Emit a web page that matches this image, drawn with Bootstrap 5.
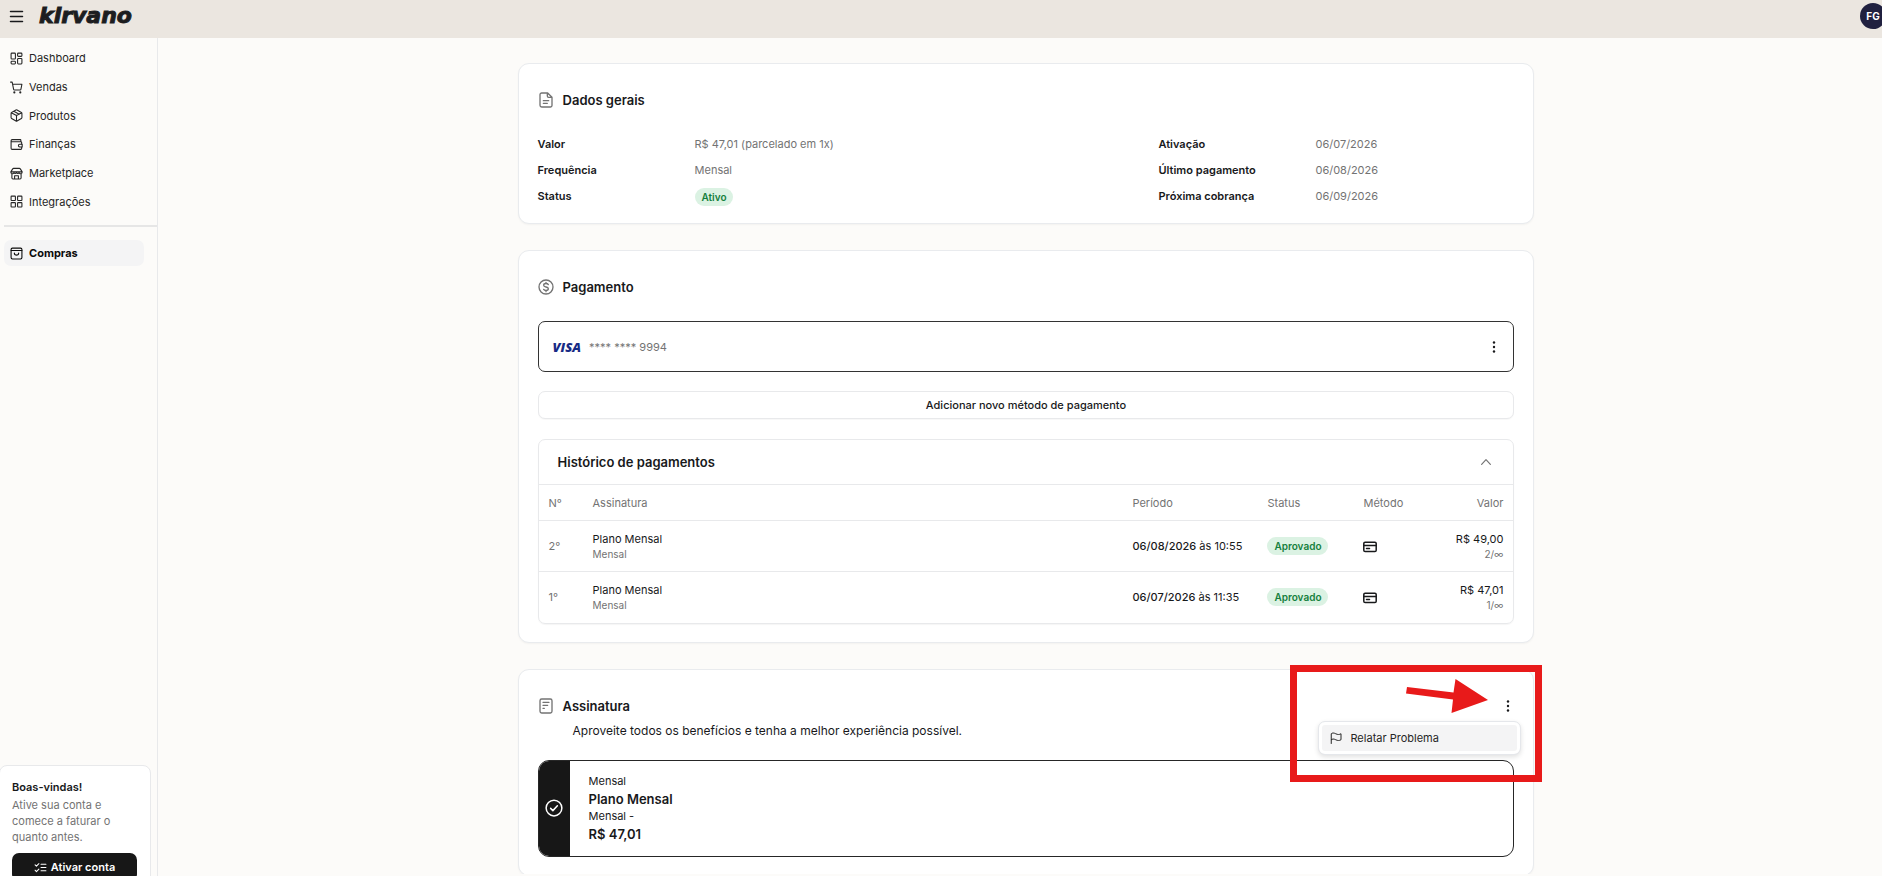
<!DOCTYPE html>
<html lang="pt-BR">
<head>
<meta charset="utf-8">
<meta name="viewport" content="width=device-width, initial-scale=1">
<title>Kirvano - Compras</title>
<link rel="stylesheet" href="https://cdn.jsdelivr.net/npm/bootstrap@5.3.0/dist/css/bootstrap.min.css">
<style>
  :root { --ink: #18191b; --muted: #737373; --line: #e8e9eb; --dark: #171717; }
  body { font-family: Inter, "Liberation Sans", sans-serif; font-size: 11px; line-height: 16px; color: var(--ink); background: #fcfbf9; }
  svg { flex: none; }
  .ico { fill: none; stroke: currentColor; stroke-width: 2; stroke-linecap: round; stroke-linejoin: round; }
  .ico-wide { stroke-width: 1.5; }
  .fw-medium-x { font-weight: 500; }
  .fw-semi { font-weight: 600; }
  .quiet { color: var(--muted); }
  .fine { font-size: 10px; line-height: 14px; }
  .btn { --bs-btn-font-size: 11px; --bs-btn-line-height: 16px; }
  .btn-bare { padding: 0; border: 0; color: inherit; display: inline-flex; }

  .topbar { height: 38px; background: #ebe6e0; padding: 0 0 6px 9px; overflow: hidden; }
  .brand { font-family: "DejaVu Sans", sans-serif; font-weight: 700; font-style: italic; font-size: 22px; line-height: 26px; color: #1c1d1f; -webkit-text-stroke: 1px #1c1d1f; text-decoration: none; margin-left: 15px; }
  .avatar { width: 26px; height: 26px; margin-right: -4px; background: #20203f; color: #fff; font-size: 10px; font-weight: 700; }

  .shell { height: calc(100vh - 38px); }
  .sidebar { width: 158px; border-right: 1px solid var(--line); overflow: hidden; }
  .menu { height: 172px; margin-top: 6px; }
  .side-link { color: #262626; text-decoration: none; display: flex; align-items: center; gap: 6px; padding: 0 6px; height: 26px; border-radius: 7px; margin: 0 13px 0 4px; }
  .side-link.active { background: #f4f4f5; font-weight: 700; color: #0a0a0a; }
  .side-rule { margin: 9px 0 13px 4px; border-top: 2px solid #e6e6e6; opacity: 1; }
  .welcome { width: 152px; margin: auto 0 -18px -1px; padding: 13px 13px 12px 12px; border: 1px solid var(--line); border-radius: 8px; background: #fff; }
  .welcome p { margin: 2px 0 8px; }
  .btn-ink { --bs-btn-bg: #171717; --bs-btn-color: #fff; --bs-btn-hover-bg: #333; --bs-btn-hover-color: #fff; --bs-btn-border-radius: 7px; height: 28px; padding: 0; font-weight: 600; border: 0; }

  .stage { height: calc(100vh - 40px); padding: 25px 0 0 12px; overflow: hidden; }
  .stack { width: 59.4%; min-width: 860px; }
  .panel { background: #fff; border: 1px solid #e9ebee; border-radius: 11px; padding: 0 19px 18px; box-shadow: 0 1px 2px rgba(0,0,0,.04); margin-bottom: 26px; position: relative; }
  .panel-head { height: 34px; margin-top: 19px; display: flex; align-items: center; gap: 9px; }
  .panel-head h2 { font-size: 13px; line-height: 18px; font-weight: 600; margin: 0; }
  .facts { display: grid; grid-template-columns: 157px 1fr 157px 199px; margin: 14px 0 -4px; line-height: 26px; }
  .facts dt { font-weight: 600; }
  .facts dd { margin: 0; color: var(--muted); }
  .tag-ok { display: inline-block; background: #dbf2e3; color: #15803d; font-size: 10px; font-weight: 600; line-height: 18px; padding: 0 7px; border-radius: 9px; vertical-align: middle; }

  .pay-card { height: 51px; margin-top: 17px; border: 1px solid #333; border-radius: 7px; padding: 0 14px; }
  .visa { font-family: "Open Sans", sans-serif; font-weight: 800; font-style: italic; font-size: 13px; color: #172b85; }
  .btn-line { height: 28px; margin: 19px 0 20px; padding: 0; background: #fff; border: 1px solid var(--line); border-radius: 7px; font-weight: 500; color: var(--ink); box-shadow: 0 1px 1px rgba(0,0,0,.03); }
  .history { border: 1px solid var(--line); border-radius: 7px; box-shadow: 0 1px 1px rgba(0,0,0,.04); }
  .history-head { width: 100%; height: 44px; padding: 0 20px 0 19px; border: 0; background: none; font-size: 13px; font-weight: 600; color: var(--ink); }
  .pays { table-layout: fixed; margin: 0; color: var(--ink); --bs-table-bg: transparent; --bs-table-color: var(--ink); }
  .pays th, .pays td { padding: 0 10px; border: 0; border-top: 1px solid var(--line); vertical-align: middle; white-space: nowrap; }
  .pays th { height: 36px; font-weight: 400; color: var(--muted); }
  .pays td { height: 51px; }
  .pays .quiet { color: var(--muted); }
  .w-num { width: 44px; } .w-per { width: 135px; } .w-sta { width: 96px; } .w-met { width: 83px; } .w-val { width: 77px; }

  .plan { height: 97px; margin-top: 21px; border: 1px solid #262626; border-radius: 11px; overflow: hidden; }
  .plan-check { width: 31px; background: var(--dark); color: #fff; }
  .plan-text { padding-left: 19px; line-height: 17px; }
  .plan-name { font-size: 13px; font-weight: 600; line-height: 18px; }
  .blurb { margin: 0 0 0 35px; font-size: 12px; line-height: 16px; }
  .more-menu { position: absolute; top: 51px; right: 12px; z-index: 2; width: 203px; min-width: 0; padding: 3px; border: 1px solid #e5e7eb; border-radius: 7px; box-shadow: 0 2px 5px rgba(0,0,0,.12); }
  .more-menu .dropdown-item { height: 26px; padding: 0 8px; font-size: 11px; background: #f4f4f5; border-radius: 3px; color: #262626; }
  .callout { position: absolute; top: -5px; right: -9px; z-index: 3; pointer-events: none; }
</style>
</head>
<body class="overflow-hidden">
<header class="topbar d-flex align-items-center">
  <button class="btn btn-bare" aria-label="Abrir menu"><svg class="ico ico-wide" width="15" height="15" viewBox="0 0 15 15"><path d="M1.500 2.500h12M1.500 7.500h12M1.500 12.500h12"/></svg></button>
  <a class="brand" href="#">kirvano</a>
  <button class="btn btn-bare avatar rounded-circle ms-auto align-items-center justify-content-center">FG</button>
</header>

<div class="shell d-flex">
  <aside class="sidebar d-flex flex-column flex-shrink-0">
    <ul class="menu list-unstyled d-flex flex-column mb-0">
      <li class="flex-fill d-flex align-items-center"><a class="side-link" href="#"><svg class="ico" width="13" height="13" viewBox="0 0 24 24"><rect x="2" y="2" width="8" height="11" rx="1.5"/><rect x="14" y="2" width="8" height="6" rx="1.5"/><rect x="14" y="12" width="8" height="10" rx="1.5"/><rect x="2" y="17" width="8" height="5" rx="1.5"/></svg>Dashboard</a></li>
      <li class="flex-fill d-flex align-items-center"><a class="side-link" href="#"><svg class="ico" width="13" height="13" viewBox="0 0 24 24"><circle cx="8" cy="21" r="1"/><circle cx="19" cy="21" r="1"/><path d="M1 2h3l2.7 13.4a1.5 1.5 0 0 0 1.5 1.2h10.4a1.5 1.5 0 0 0 1.5-1.2L22 6H5"/></svg>Vendas</a></li>
      <li class="flex-fill d-flex align-items-center"><a class="side-link" href="#"><svg class="ico" width="13" height="13" viewBox="0 0 24 24"><path d="M11 22.2a2 2 0 0 0 2 0l8-4.6a2 2 0 0 0 1-1.7V8.1a2 2 0 0 0-1-1.7l-8-4.6a2 2 0 0 0-2 0L3 6.400a2 2 0 0 0-1 1.700v7.800a2 2 0 0 0 1 1.700zM12 22V12M2.400 7 12 12l9.600-5M7 4.300l10 5.200"/></svg>Produtos</a></li>
      <li class="flex-fill d-flex align-items-center"><a class="side-link" href="#"><svg class="ico" width="13" height="13" viewBox="0 0 24 24"><path d="M20 7V4a1 1 0 0 0-1-1H4a2 2 0 0 0 0 4h16a1.500 1.500 0 0 1 1.500 1.500V11M2 5v14a2 2 0 0 0 2 2h16a1.500 1.500 0 0 0 1.500-1.500V17"/><path d="M22.500 11.500H18a2.500 2.500 0 0 0 0 5h4.500z"/></svg>Finanças</a></li>
      <li class="flex-fill d-flex align-items-center"><a class="side-link" href="#"><svg class="ico" width="13" height="13" viewBox="0 0 24 24"><path d="M1.500 9 5 3.500A2 2 0 0 1 6.700 2.500h10.600A2 2 0 0 1 19 3.500L22.500 9zM3.500 12.500V20a2 2 0 0 0 2 2h13a2 2 0 0 0 2-2v-7.500M8.500 22v-6h7v6M1.500 9a3 3 0 0 0 5.500 2 3.500 3.500 0 0 0 5 0 3.500 3.500 0 0 0 5 0 3 3 0 0 0 5.500-2"/></svg>Marketplace</a></li>
      <li class="flex-fill d-flex align-items-center"><a class="side-link" href="#"><svg class="ico" width="13" height="13" viewBox="0 0 24 24"><rect x="2" y="2" width="8" height="8" rx="1"/><rect x="14" y="2" width="8" height="8" rx="1"/><rect x="14" y="14" width="8" height="8" rx="1"/><rect x="2" y="14" width="8" height="8" rx="1"/></svg>Integrações</a></li>
    </ul>
    <hr class="side-rule">
    <a class="side-link active" href="#"><svg class="ico" width="13" height="13" viewBox="0 0 24 24"><rect x="2" y="2" width="20" height="20" rx="2.500"/><path d="M2 6.500h20M16 11a4 4 0 0 1-8 0"/></svg>Compras</a>
    <section class="welcome">
      <div class="fw-semi">Boas-vindas!</div>
      <p class="quiet">Ative sua conta e<br>comece a faturar o<br>quanto antes.</p>
      <button class="btn btn-ink w-100 d-flex align-items-center justify-content-center gap-1"><svg class="ico" width="13" height="13" viewBox="0 0 24 24"><path d="m2 17 2.500 2.500L9 15M2 7l2.500 2.500L9 5M13 6h9M13 12h9M13 18h9"/></svg>Ativar conta</button>
    </section>
  </aside>

  <main class="stage flex-grow-1">
    <div class="stack mx-auto">

      <section class="panel">
        <div class="panel-head">
          <svg class="ico quiet" width="16" height="16" viewBox="0 0 24 24"><path d="M14.500 1.500H5.500a2.500 2.500 0 0 0-2.500 2.500v16a2.500 2.500 0 0 0 2.500 2.500h13a2.500 2.500 0 0 0 2.500-2.500V8zM14 1.500V6a2 2 0 0 0 2 2h5M8 13h8M8 17h6"/></svg>
          <h2>Dados gerais</h2>
        </div>
        <dl class="facts">
          <dt>Valor</dt><dd>R$ 47,01 (parcelado em 1x)</dd><dt>Ativação</dt><dd>06/07/2026</dd>
          <dt>Frequência</dt><dd>Mensal</dd><dt>Último pagamento</dt><dd>06/08/2026</dd>
          <dt>Status</dt><dd><span class="tag-ok">Ativo</span></dd><dt>Próxima cobrança</dt><dd>06/09/2026</dd>
        </dl>
      </section>

      <section class="panel">
        <div class="panel-head">
          <svg class="ico quiet" width="16" height="16" viewBox="0 0 24 24"><circle cx="12" cy="12" r="10.500"/><path d="M15.500 8.500c-.7-1.200-2-1.700-3.500-1.700-2 0-3.500 1-3.500 2.600s1.400 2.200 3.500 2.600 3.500 1 3.500 2.600-1.500 2.600-3.500 2.600c-1.500 0-2.800-.5-3.500-1.700M12 5v1.500M12 17.500V19"/></svg>
          <h2>Pagamento</h2>
        </div>
        <div class="pay-card d-flex align-items-center">
          <span class="visa">VISA</span>
          <span class="quiet ms-2">**** **** 9994</span>
          <button class="btn btn-bare ms-auto" aria-label="Opções do cartão"><svg width="10" height="12" viewBox="0 0 10 12" fill="currentColor"><circle cx="5" cy="1.500" r="1.200"/><circle cx="5" cy="6" r="1.200"/><circle cx="5" cy="10.500" r="1.200"/></svg></button>
        </div>
        <button class="btn btn-line w-100">Adicionar novo método de pagamento</button>
        <div class="history">
          <button class="history-head d-flex align-items-center justify-content-between" aria-expanded="true">Histórico de pagamentos
            <svg class="ico quiet" width="14" height="14" viewBox="0 0 24 24"><path d="m4.500 16 7.500-8 7.500 8"/></svg></button>
          <table class="table pays">
            <thead><tr><th class="w-num">N°</th><th>Assinatura</th><th class="w-per">Período</th><th class="w-sta">Status</th><th class="w-met">Método</th><th class="w-val text-end">Valor</th></tr></thead>
            <tbody>
              <tr>
                <td class="quiet">2°</td><td>Plano Mensal<div class="quiet fine">Mensal</div></td>
                <td><span class="fw-medium-x">06/08/2026</span> às 10:55</td>
                <td><span class="tag-ok">Aprovado</span></td>
                <td><svg class="ico ico-wide" width="14" height="12" viewBox="0 0 14 12" aria-label="Cartão"><rect x=".8" y="1.200" width="12.400" height="9.300" rx="1.300"/><path d="M1 4.500h12M3.500 7.500h3"/></svg></td>
                <td class="text-end">R$ 49,00<div class="quiet fine">2/∞</div></td>
              </tr>
              <tr>
                <td class="quiet">1°</td><td>Plano Mensal<div class="quiet fine">Mensal</div></td>
                <td><span class="fw-medium-x">06/07/2026</span> às 11:35</td>
                <td><span class="tag-ok">Aprovado</span></td>
                <td><svg class="ico ico-wide" width="14" height="12" viewBox="0 0 14 12" aria-label="Cartão"><rect x=".8" y="1.200" width="12.400" height="9.300" rx="1.300"/><path d="M1 4.500h12M3.500 7.500h3"/></svg></td>
                <td class="text-end">R$ 47,01<div class="quiet fine">1/∞</div></td>
              </tr>
            </tbody>
          </table>
        </div>
      </section>

      <section class="panel">
        <div class="panel-head">
          <svg class="ico quiet" width="16" height="16" viewBox="0 0 24 24"><rect x="3" y="1.500" width="18" height="21" rx="2.500"/><path d="M7.500 6.500h9M7.500 11h7M7.500 15.500h2"/></svg>
          <h2>Assinatura</h2>
          <button class="btn btn-bare ms-auto" aria-label="Opções da assinatura" aria-expanded="true"><svg width="12" height="12" viewBox="0 0 12 12" fill="currentColor"><circle cx="6" cy="1.500" r="1.200"/><circle cx="6" cy="6" r="1.200"/><circle cx="6" cy="10.500" r="1.200"/></svg></button>
        </div>
        <p class="blurb">Aproveite todos os benefícios e tenha a melhor experiência possível.</p>
        <div class="plan d-flex">
          <div class="plan-check d-flex align-items-center justify-content-center"><svg class="ico" width="18" height="18" viewBox="0 0 24 24"><circle cx="12" cy="12" r="10.500"/><path d="m7.500 12.500 3 3 6-6.500"/></svg></div>
          <div class="plan-text my-auto">
            <div>Mensal</div><div class="plan-name">Plano Mensal</div>
            <div>Mensal -</div><div class="plan-name">R$ 47,01</div>
          </div>
        </div>
        <div class="dropdown-menu show more-menu">
          <button class="dropdown-item d-flex align-items-center gap-2"><svg class="ico" width="12" height="12" viewBox="0 0 24 24"><path d="M2.500 23V3.500c2-2 5-2 9 0s7 2 10.500 0V15.500c-3.500 2-6.500 2-10.500 0s-7-2-9 0"/></svg>Relatar Problema</button>
        </div>
        <svg class="callout" width="252" height="117" viewBox="0 0 252 117" fill="#e81a1a" aria-hidden="true">
          <path fill-rule="evenodd" d="M0 0h252v117H0zM7 7v103h238V7z"/>
          <path d="M117 22 163.500 27.500 165.500 14 198 35 161.500 48 163 34.500 116 28.500z"/>
        </svg>
      </section>

    </div>
  </main>
</div>
<script src="https://cdn.jsdelivr.net/npm/bootstrap@5.3.0/dist/js/bootstrap.bundle.min.js"></script>
</body>
</html>
